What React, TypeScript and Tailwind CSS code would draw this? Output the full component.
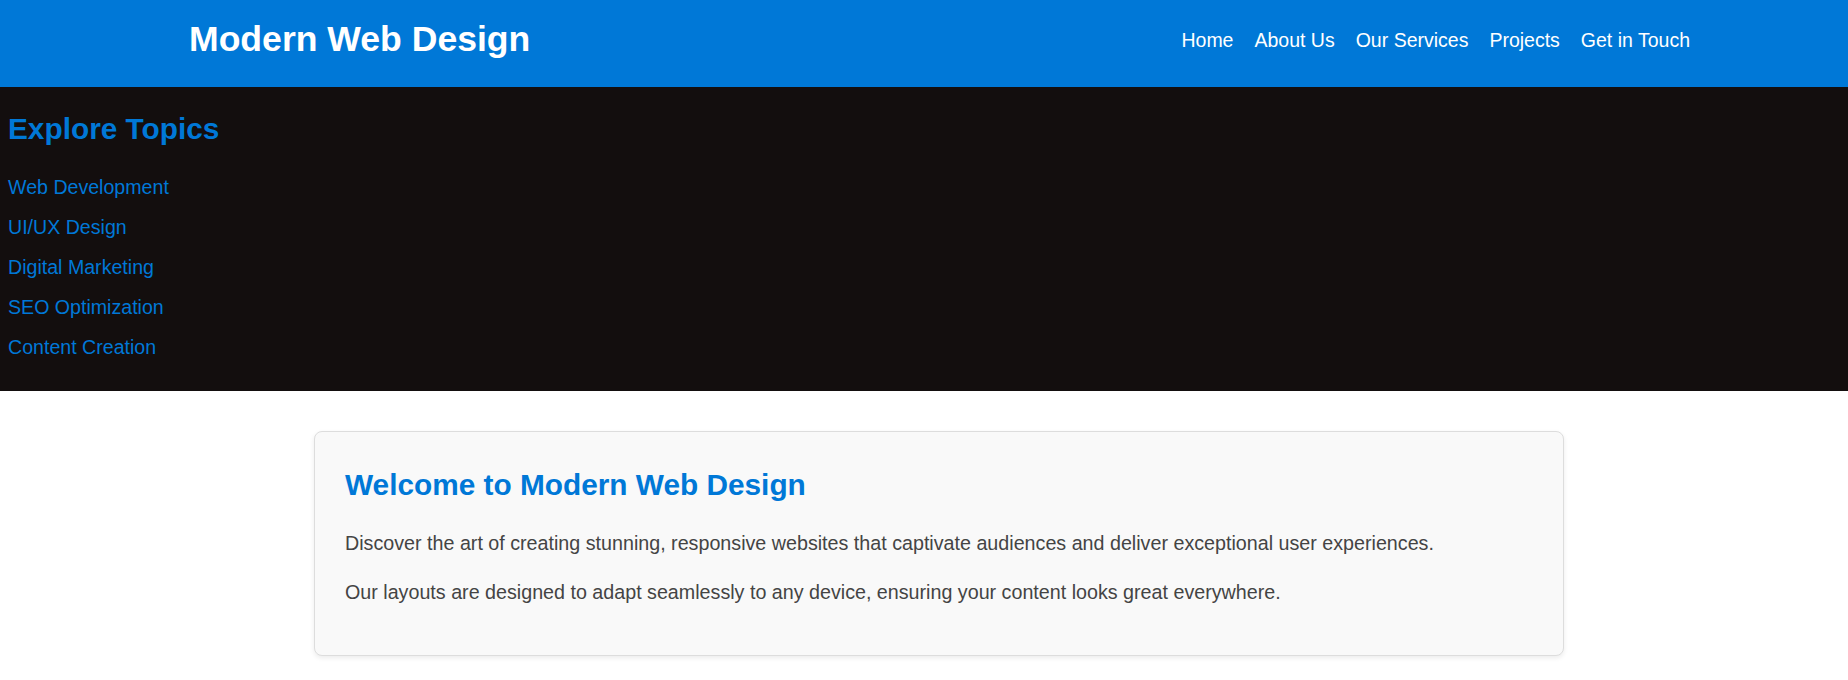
const navItems = ['Home', 'About Us', 'Our Services', 'Projects', 'Get in Touch']

const topics = [
    'Web Development',
    'UI/UX Design',
    'Digital Marketing',
    'SEO Optimization',
    'Content Creation',
]

const App = () => {
    return (
        <div className="min-h-[680px] bg-white font-['Liberation_Sans',Arial,sans-serif]">
            {/* Header */}
            <header className="h-[87px] bg-[#0078d7] flex items-start justify-between pl-[189px] pr-[158px]">
                <h1 className="mt-[19px] text-[35.6px] leading-[40px] font-bold text-white">
                    Modern Web Design
                </h1>
                <nav className="mt-[28px]">
                    <ul className="flex gap-[21px]">
                        {navItems.map((item) => (
                            <li key={item}>
                                <a href="#" className="text-[19.5px] leading-[24px] text-white">
                                    {item}
                                </a>
                            </li>
                        ))}
                    </ul>
                </nav>
            </header>

            {/* Sidebar */}
            <aside className="bg-[#130e0e] pl-2 pt-[25px] pb-[24px]">
                <h2 className="text-[29.8px] leading-[34px] font-bold text-[#0078d7]">
                    Explore Topics
                </h2>
                <ul className="mt-[21px]">
                    {topics.map((t) => (
                        <li key={t}>
                            <a href="#" className="text-[19.6px] leading-[40px] text-[#0078d7]">
                                {t}
                            </a>
                        </li>
                    ))}
                </ul>
            </aside>

            {/* Main */}
            <main className="pt-[40px] pb-[22px]">
                <section className="ml-[314px] w-[1250px] bg-[#f9f9f9] border border-[#dddddd] rounded-lg shadow-[0_2px_5px_rgba(0,0,0,0.08)] pl-[30px] pr-[30px] pt-[35px] pb-[48px]">
                    <h2 className="text-[29.8px] leading-[36px] font-bold text-[#0078d7]">
                        Welcome to Modern Web Design
                    </h2>
                    <p className="mt-[25px] text-[19.7px] leading-[30px] text-[#444444]">
                        Discover the art of creating stunning, responsive websites that captivate audiences and deliver exceptional user experiences.
                    </p>
                    <p className="mt-[19px] text-[19.7px] leading-[30px] text-[#444444]">
                        Our layouts are designed to adapt seamlessly to any device, ensuring your content looks great everywhere.
                    </p>
                </section>
            </main>
        </div>
    )
}

export default App
